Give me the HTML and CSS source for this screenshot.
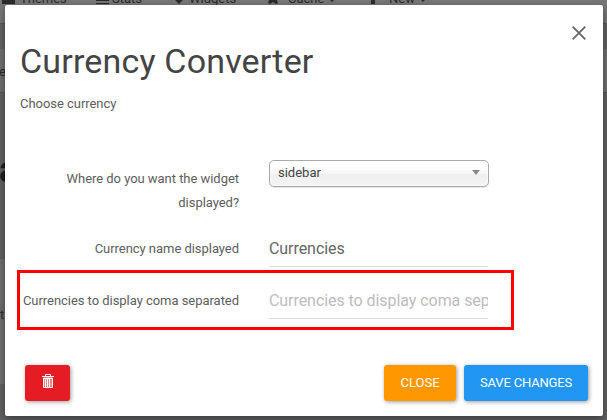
FILE: index.html
```html
<!DOCTYPE html>
<html lang="en">
<head>
<meta charset="utf-8">
<title>Currency Converter</title>
<link rel="stylesheet" href="styles.css">
</head>
<body>
<div class="page">
  <nav class="topbar">
    <span class="nav themes"><i class="ico-themes"></i>Themes</span>
    <span class="nav stats"><i class="ico-stats"></i>Stats</span>
    <span class="nav widgets"><svg width="8" height="8" viewBox="0 0 8 8"><path d="M3 0h2v3h3L4 7 0 3h3z"/></svg>Widgets</span>
    <span class="nav cache"><svg width="10" height="8" viewBox="0 0 10 8"><path d="M1 0h8v1l1 2-2 1-3-2-3 2-2-1z"/></svg>Cache<i class="caret"></i></span>
    <span class="nav new"><i class="ico-new"></i>New<i class="caret"></i></span>
  </nav>
  <div class="band subbar"></div>
  <div class="band crumbs">e</div>
  <div class="band heading">a</div>
  <div class="band panel"><span>t</span></div>
  <div class="band foot"></div>
</div>
<section class="modal">
  <button class="dismiss" aria-label="Close"><svg width="14" height="14" viewBox="0 0 14 14"><path d="M.7.7l12.6 12.6M13.3.7L.7 13.3"/></svg></button>
  <h1>Currency Converter</h1>
  <p class="intro">Choose currency</p>
  <form>
    <div class="row place">
      <label>Where do you want the widget displayed?</label>
      <div class="select"><span>sidebar</span><i></i></div>
    </div>
    <div class="row name">
      <label for="name">Currency name displayed</label>
      <input id="name" type="text" value="Currencies">
    </div>
    <div class="row marked">
      <label for="list">Currencies to display coma separated</label>
      <input id="list" type="text" placeholder="Currencies to display coma separated">
    </div>
  </form>
  <footer>
    <button class="btn delete" aria-label="Delete"><svg width="12" height="14" viewBox="0 0 12 14"><path class="lid" d="M0 2.500h12M3.500 2.500V.5h5v2"/><path class="can" d="M1.500 4v9.500h9V4z"/><path class="ribs" d="M1.500 4.500h9M3.500 5v8M5.500 5v8M7.500 5v8"/></svg></button>
    <button class="btn close">CLOSE</button>
    <button class="btn save">SAVE CHANGES</button>
  </footer>
</section>
</body>
</html>
```
FILE: styles.css
```css
* { box-sizing: border-box; }
body {
  margin: 0;
  width: 607px;
  height: 420px;
  overflow: hidden;
  position: relative;
  font-family: Roboto, "Liberation Sans", sans-serif;
  font-size: 13px;
  color: #5e5e5e;
}
.page { height: 420px; background: #5f6163; color: #2b2b2b; }
.topbar { position: relative; height: 24px; background: #777; border-bottom: 1px solid #555; }
.nav { position: absolute; top: -9px; line-height: 16px; white-space: nowrap; }
.nav svg, .nav i { position: absolute; fill: #2b2b2b; }
.nav svg { left: -14px; top: 6px; }
.themes { left: 20px; }
.stats { left: 112px; }
.widgets { left: 189px; }
.cache { left: 288px; }
.new { left: 389px; }
.ico-themes { left: -18px; top: 9px; width: 13px; height: 4px; background: #2b2b2b; }
.ico-stats { left: -16px; top: 9px; width: 13px; height: 4px; border: solid #2b2b2b; border-width: 1px 0; }
.ico-new { left: -18px; top: 9px; width: 4px; height: 4px; background: #2b2b2b; }
.cache svg { left: -20px; top: 9px; }
.caret { right: -11px; top: 8px; border: 3px solid transparent; border-top-color: #2b2b2b; }
.subbar { height: 25px; background: #626262; }
.crumbs { height: 44px; padding-top: 15px; background: #707070; border-bottom: 1px solid #555; line-height: 16px; text-indent: -1px; }
.heading { height: 166px; padding-top: 57px; font-size: 36px; font-weight: 700; line-height: 40px; text-indent: -1px; color: #1f1f1f; }
.panel { height: 125px; padding-top: 48px; background: linear-gradient(90deg, #6f6f6f 50%, #5f6163 50%); line-height: 16px; }
.foot { height: 36px; background: #5f6163; }

.modal {
  position: absolute;
  left: 5px;
  top: 5px;
  width: 598px;
  height: 411px;
  padding: 36px 15px 0;
  background: #fff;
  border-radius: 2px;
  box-shadow: 0 3px 9px rgba(0, 0, 0, .4);
}
h1 { margin: 0; font-size: 34px; font-weight: 400; line-height: 40px; letter-spacing: .18px; color: #444; white-space: nowrap; }
.intro { margin: 11px 0 0; line-height: 24px; letter-spacing: -.04px; }
.dismiss { position: absolute; right: 17px; top: 21px; width: 14px; height: 14px; padding: 0; border: 0; background: none; }
.dismiss svg { display: block; fill: none; stroke: #666; stroke-width: 1.800; }
form { padding-top: 44px; }
.row { display: grid; grid-template-columns: 219px 220px; column-gap: 30px; align-items: start; }
.place { height: 76px; }
.name { height: 34px; }
label { line-height: 24px; letter-spacing: -.04px; text-align: right; white-space: nowrap; }
.place label { padding: 7px 0 0 30px; white-space: normal; }
.name label { padding-top: 1px; }
.select {
  display: flex;
  align-items: center;
  justify-content: space-between;
  height: 27px;
  padding: 0 8px 2px 8px;
  border: 1px solid #aaa;
  border-radius: 5px;
  background: linear-gradient(#fff 20%, #f6f6f6 50%, #eee 52%, #f4f4f4 100%);
  box-shadow: 0 0 3px #fff inset, 0 1px 1px rgba(0, 0, 0, .1);
  color: #444;
}
.select i { border: 4px solid transparent; border-top: 5px solid #888; border-bottom: 0; }
input {
  width: 219px;
  height: 36px;
  padding: 0;
  border: 0;
  border-bottom: 1px solid #dadfde;
  outline: 0;
  background: transparent;
  font: 16px Roboto, "Liberation Sans", sans-serif;
  letter-spacing: -.06px;
  color: #666;
}
input::placeholder { color: #bdbdbd; opacity: 1; }
.name input { margin-top: -5px; }
.marked {
  width: 497px;
  height: 60px;
  margin-left: -3px;
  border: 3px solid #f00;
  padding-top: 10px;
}
.marked label { padding-top: 6px; }
footer { display: flex; gap: 8px; width: 568px; padding: 35px 0 0 5px; }
.btn {
  height: 36px;
  padding: 0 0 2px;
  border: 0;
  border-radius: 3px;
  color: #fff;
  font: 13px Roboto, "Liberation Sans", sans-serif;
  box-shadow: 1px 1px 4px rgba(0, 0, 0, .4);
}
.delete { width: 45px; margin-right: auto; background: #e51c23; }
.delete svg { display: block; margin: -3px auto 0; fill: none; stroke: #fff; }
.delete .can { fill: #f0848a; }
.close { width: 72px; background: #ff9800; }
.save { width: 124px; background: #2196f3; letter-spacing: -.18px; }
```
